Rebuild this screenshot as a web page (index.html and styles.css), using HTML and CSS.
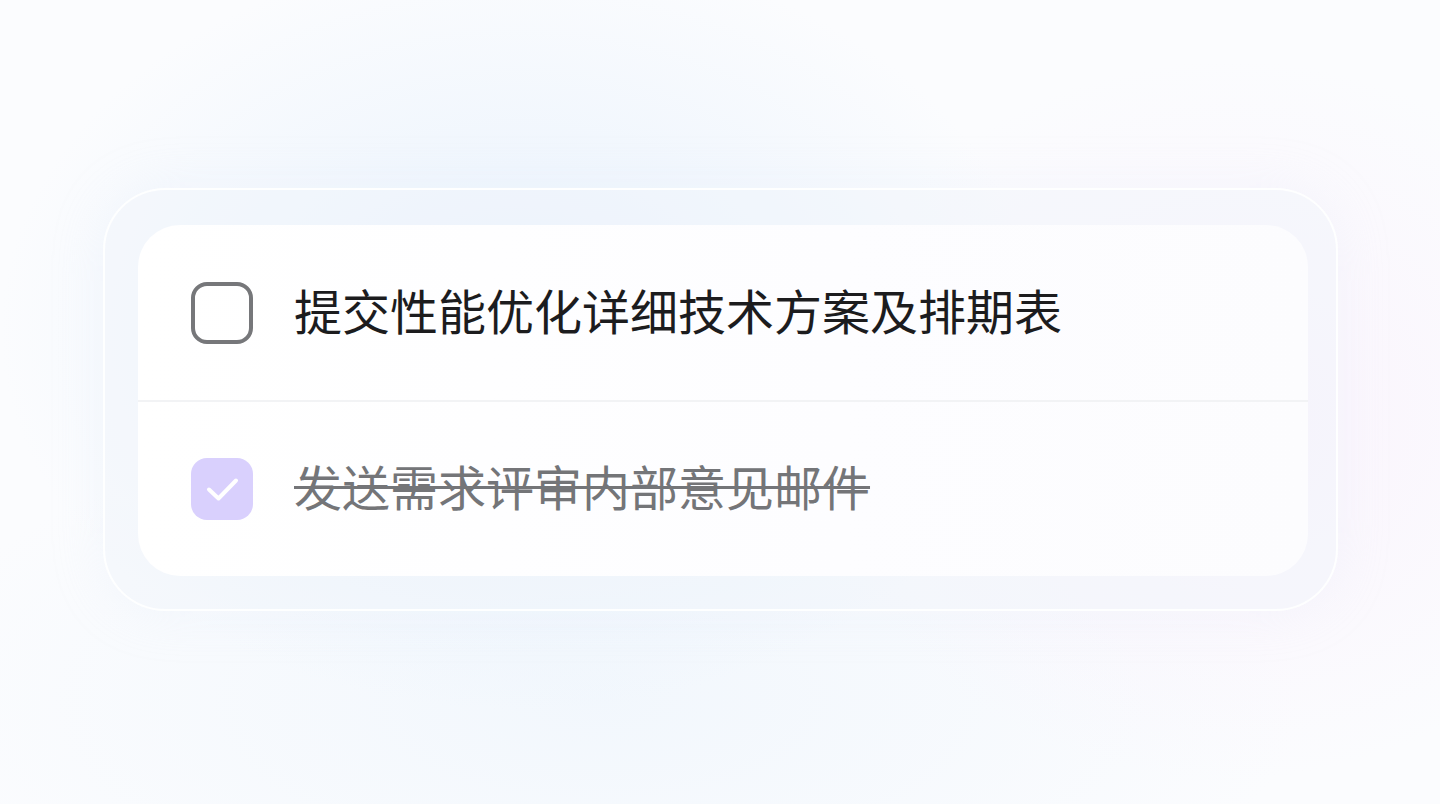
FILE: index.html
```html
<!DOCTYPE html>
<html lang="zh-CN">
<head>
<meta charset="utf-8">
<title>Todo</title>
<link rel="stylesheet" href="styles.css">
</head>
<body>
<main class="stage">
  <section class="frame">
    <ul class="card">
      <li class="row">
        <span class="box"></span>
        <span class="label">提交性能优化详细技术方案及排期表</span>
      </li>
      <li class="row done">
        <span class="box checked">
          <svg viewBox="0 0 62 62" width="62" height="62" aria-hidden="true"><path d="M18 31.5l9.5 9L45 22.5" fill="none" stroke="#fff" stroke-width="4" stroke-linecap="round" stroke-linejoin="round"/></svg>
        </span>
        <span class="label">发送需求评审内部意见邮件</span>
      </li>
    </ul>
  </section>
</main>
</body>
</html>
```
FILE: styles.css
```css
html, body {
  margin: 0;
  padding: 0;
  height: 100%;
}
body {
  font-family: "Noto Sans CJK SC", "Noto Sans", sans-serif;
  background:
    radial-gradient(ellipse 520px 380px at 520px 330px, rgba(225, 238, 252, 0.75), rgba(225, 238, 252, 0) 100%),
    radial-gradient(ellipse 420px 360px at 1230px 420px, rgba(250, 240, 252, 0.7), rgba(250, 240, 252, 0) 100%),
    radial-gradient(ellipse 700px 300px at 600px 700px, rgba(236, 244, 252, 0.6), rgba(236, 244, 252, 0) 100%),
    #fbfcfe;
  overflow: hidden;
}
.stage {
  padding: 188px 102px 0 103px;
}
.frame {
  width: 1235px;
  box-sizing: border-box;
  border: 2px solid rgba(255, 255, 255, 0.9);
  border-radius: 62px;
  background: rgba(240, 244, 250, 0.45);
  padding: 35px 28px 33px 33px;
  box-shadow: 0 0 50px rgba(228, 234, 246, 0.25);
}
.card {
  list-style: none;
  margin: 0;
  padding: 0;
  background: linear-gradient(90deg, #ffffff 0%, #fdfdff 60%, #fcfcfe 100%);
  border-radius: 42px;
}
.row {
  display: flex;
  align-items: center;
  gap: 41px;
  height: 175px;
  padding: 0 53px;
}
.row + .row {
  border-top: 2px solid #f2f3f5;
  height: 174px;
}
.box {
  flex: none;
  width: 62px;
  height: 62px;
  box-sizing: border-box;
  border: 4px solid #76777a;
  border-radius: 16px;
  display: flex;
  align-items: center;
  justify-content: center;
}
.box.checked {
  border: none;
  background: #d9d0fd;
}
.box svg {
  display: block;
}
.label {
  font-size: 48px;
  line-height: 1;
  color: #1c1c1e;
  margin-top: -8px;
}
.done .label {
  color: #747578;
  text-decoration: line-through;
  text-decoration-thickness: 3px;
  text-decoration-color: #747578;
}
```
